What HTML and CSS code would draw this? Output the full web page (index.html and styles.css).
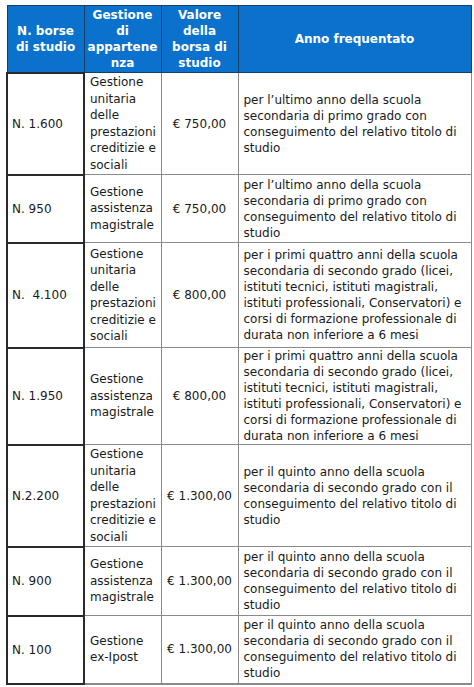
FILE: index.html
```html
<!DOCTYPE html>
<html lang="it">
<head>
<meta charset="utf-8">
<link rel="stylesheet" href="styles.css">
</head>
<body>
<table class="borse">
  <colgroup>
    <col class="c1"><col class="c2"><col class="c3"><col class="c4">
  </colgroup>
  <thead>
    <tr class="h">
      <th>N. borse<br>di studio</th>
      <th>Gestione<br>di<br>appartene<br>nza</th>
      <th>Valore<br>della<br>borsa di<br>studio</th>
      <th>Anno frequentato</th>
    </tr>
  </thead>
  <tbody>
    <tr class="r1">
      <td class="n">N. 1.600</td>
      <td class="g">Gestione<br>unitaria<br>delle<br>prestazioni<br>creditizie e<br>sociali</td>
      <td class="v">€ 750,00</td>
      <td class="a">per l’ultimo anno della scuola secondaria di primo grado con conseguimento del relativo titolo di studio</td>
    </tr>
    <tr class="r2">
      <td class="n">N. 950</td>
      <td class="g">Gestione<br>assistenza<br>magistrale</td>
      <td class="v">€ 750,00</td>
      <td class="a">per l’ultimo anno della scuola secondaria di primo grado con conseguimento del relativo titolo di studio</td>
    </tr>
    <tr class="r3">
      <td class="n">N.&nbsp; 4.100</td>
      <td class="g">Gestione<br>unitaria<br>delle<br>prestazioni<br>creditizie e<br>sociali</td>
      <td class="v">€ 800,00</td>
      <td class="a">per i primi quattro anni della scuola secondaria di secondo grado (licei, istituti tecnici, istituti magistrali, istituti professionali, Conservatori) e corsi di formazione professionale di durata non inferiore a 6 mesi</td>
    </tr>
    <tr class="r4">
      <td class="n">N. 1.950</td>
      <td class="g">Gestione<br>assistenza<br>magistrale</td>
      <td class="v">€ 800,00</td>
      <td class="a">per i primi quattro anni della scuola secondaria di secondo grado (licei, istituti tecnici, istituti magistrali, istituti professionali, Conservatori) e corsi di formazione professionale di durata non inferiore a 6 mesi</td>
    </tr>
    <tr class="r5">
      <td class="n">N.2.200</td>
      <td class="g">Gestione<br>unitaria<br>delle<br>prestazioni<br>creditizie e<br>sociali</td>
      <td class="v">€ 1.300,00</td>
      <td class="a">per il quinto anno della scuola secondaria di secondo grado con il conseguimento del relativo titolo di studio</td>
    </tr>
    <tr class="r6">
      <td class="n">N. 900</td>
      <td class="g">Gestione<br>assistenza<br>magistrale</td>
      <td class="v">€ 1.300,00</td>
      <td class="a">per il quinto anno della scuola secondaria di secondo grado con il conseguimento del relativo titolo di studio</td>
    </tr>
    <tr class="r7">
      <td class="n">N. 100</td>
      <td class="g">Gestione<br>ex-Ipost</td>
      <td class="v">€ 1.300,00</td>
      <td class="a">per il quinto anno della scuola secondaria di secondo grado con il conseguimento del relativo titolo di studio</td>
    </tr>
  </tbody>
</table>
</body>
</html>
```

FILE: styles.css
```css
html, body {
  margin: 0;
  padding: 0;
  background: #ffffff;
}
body {
  padding: 5px 0 0 6px;
  font-family: "DejaVu Sans", Verdana, sans-serif;
  font-size: 12px;
  color: #1a1a1a;
}
.borse {
  border-collapse: collapse;
  table-layout: fixed;
  width: 464px;
}
.c1 { width: 77px; }
.c2 { width: 77px; }
.c3 { width: 77px; }
.c4 { width: 233px; }

.borse th {
  background: #0a72cc;
  color: #ffffff;
  font-weight: bold;
  text-align: center;
  vertical-align: middle;
  line-height: 16px;
  padding: 0 3px;
  border: 1px solid #163f66;
  height: 67px;
  box-sizing: border-box;
}
.borse td {
  border: 1px solid #8a8a8a;
  line-height: 16px;
  padding: 0 4px;
  vertical-align: middle;
}
.borse td.n {
  border: 2px solid #2a2a2a;
  padding-left: 4px;
}
.borse td.v {
  text-align: center;
  padding: 0 2px;
}
.borse td.a {
  padding-left: 5px;
}
.borse td.g {
  padding-left: 5px;
  line-height: 16.5px;
}
.r1 { height: 102px; }
.r2 { height: 68px; }
.r3 { height: 105px; }
.r4 { height: 97px; }
.r5 { height: 102px; }
.r6 { height: 69px; }
.r7 { height: 68px; }
.borse tbody tr:last-child td {
  border-bottom: 2px solid #8a8a8a;
}
.borse tbody tr:last-child td.n {
  border-bottom: 2px solid #2a2a2a;
}
```
